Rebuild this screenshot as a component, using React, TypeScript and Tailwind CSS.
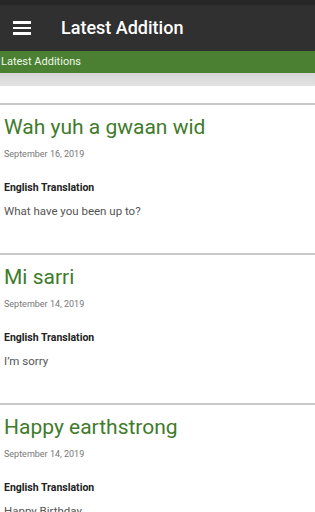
import React from "react";

const items = [
  { title: "Wah yuh a gwaan wid", date: "September 16, 2019", tr: "What have you been up to?" },
  { title: "Mi sarri", date: "September 14, 2019", tr: "I’m sorry" },
  { title: "Happy earthstrong", date: "September 14, 2019", tr: "Happy Birthday" },
];

function Card({ title, date, tr }: { title: string; date: string; tr: string }) {
  return (
    <div>
      <div className="h-[2px] bg-[#c9c9c9]" />
      <div className="h-[148px] px-[4px] pt-[8px] bg-white">
        <div className="text-[21px] leading-[28px] text-[#3f7b2a] whitespace-nowrap">{title}</div>
        <div className="mt-[6px] text-[9px] leading-[14px] text-[#777777]">{date}</div>
        <div className="mt-[20px] text-[10.5px] leading-[14px] font-bold text-[#222222]">English Translation</div>
        <div className="mt-[8px] text-[11.5px] leading-[16px] text-[#555555]">{tr}</div>
      </div>
    </div>
  );
}

export default function App() {
  return (
    <div className="w-[315px] h-[512px] overflow-hidden bg-white" style={{ fontFamily: "Roboto, 'Noto Sans', sans-serif" }}>
      <div className="bg-[#303030] h-[51px] flex flex-col">
        <div className="h-[5px] bg-[#262626]" />
        <div className="flex-1 flex items-center">
          <div className="ml-[13px] w-[18px] flex flex-col gap-[3px]">
            <div className="h-[2.5px] bg-white" />
            <div className="h-[2.5px] bg-white" />
            <div className="h-[2.5px] bg-white" />
          </div>
          <div className="ml-[30px] text-white text-[18px] font-medium leading-none">Latest Addition</div>
        </div>
      </div>
      <div className="h-[22px] bg-[#4b8032] flex items-center pl-[1px] text-[11px] text-[#eef7e8]">Latest Additions</div>
      <div className="relative h-[30px] overflow-hidden bg-white">
        <div className="absolute left-[4px] top-[-2px] text-[11.5px] leading-[16px] text-[#999999] whitespace-nowrap">Hugs and kisses, good luck, cheers to you</div>
        <div className="absolute left-0 right-0 top-0 h-[13px] bg-gradient-to-b from-[#d6d6d6] to-[#e2e2e2]" />
      </div>
      {items.map((it) => (
        <Card key={it.title} {...it} />
      ))}
    </div>
  );
}
